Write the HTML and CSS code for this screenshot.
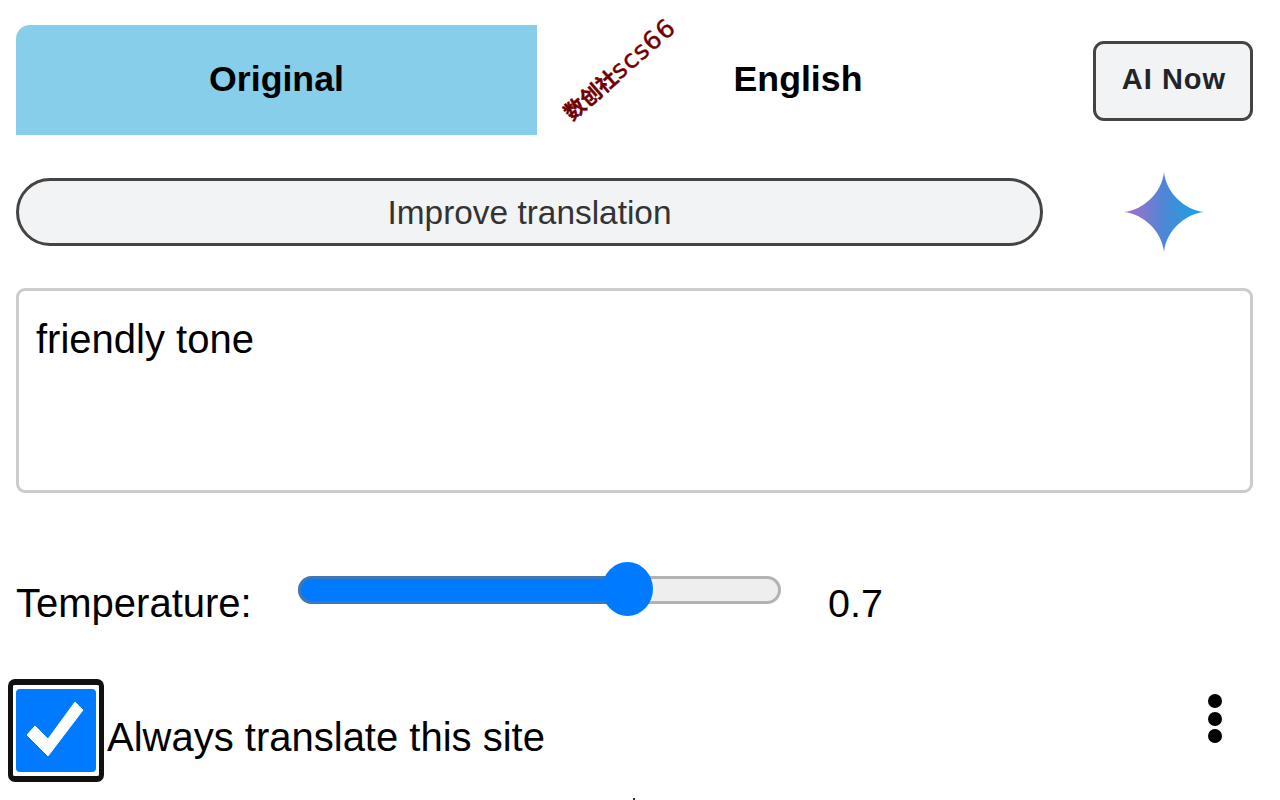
FILE: index.html
```html
<!DOCTYPE html>
<html lang="en">
<head>
<meta charset="utf-8">
<title>Translate</title>
<link rel="stylesheet" href="styles.css">
</head>
<body>
<main class="page">
  <section class="top-row">
    <div class="tabs">
      <div class="tab tab-active">Original</div>
      <div class="tab tab-rest">English</div>
      <span class="watermark"><span class="watermark-cjk">数创社</span>scs66</span>
    </div>
    <button class="ai-now">AI Now</button>
  </section>
  <section class="improve-row">
    <button class="improve">Improve translation</button>
    <svg class="star" viewBox="0 0 80 80" width="80" height="80" aria-hidden="true">
      <defs>
        <linearGradient id="starFill" x1="0" y1="0" x2="1" y2="0">
          <stop offset="0.08" stop-color="#9b72cb"/>
          <stop offset="0.5" stop-color="#4f86d6"/>
          <stop offset="0.92" stop-color="#1ba1e3"/>
        </linearGradient>
      </defs>
      <path fill="url(#starFill)" d="M40 0C42 20 60 38 80 40C60 42 42 60 40 80C38 60 20 42 0 40C20 38 38 20 40 0Z"/>
    </svg>
  </section>
  <div class="prompt">friendly tone</div>
  <section class="temp-row">
    <span class="temp-label">Temperature:</span>
    <div class="slider">
      <div class="slider-fill"></div>
      <div class="slider-thumb"></div>
    </div>
    <span class="temp-value">0.7</span>
  </section>
  <section class="always-row">
    <div class="checkbox-ring">
      <div class="checkbox">
        <svg viewBox="0 0 80 83" width="80" height="83" aria-hidden="true">
          <path fill="#fff" stroke="#fff" stroke-width="1" stroke-linejoin="round" d="M11 46L19 37L32 50L59 13L67 21L32 67Z"/>
        </svg>
      </div>
    </div>
    <span class="always-label">Always translate this site</span>
    <div class="dots"><i></i><i></i><i></i></div>
  </section>
  <div class="speck"></div>
</main>
</body>
</html>
```
FILE: styles.css
```css
html, body {
  margin: 0;
  background: #fff;
  overflow: hidden;
}
body {
  font-family: "Liberation Sans", Arial, sans-serif;
  color: #000;
}
.page {
  position: relative;
  box-sizing: border-box;
  width: 1280px;
  height: 800px;
  padding: 25px 27px 0 16px;
}
.top-row {
  display: flex;
  align-items: center;
  justify-content: space-between;
  height: 110px;
}
.tabs {
  position: relative;
  display: flex;
  width: 1043px;
}
.tab {
  width: 521px;
  height: 108px;
  padding-bottom: 2px;
  display: flex;
  align-items: center;
  justify-content: center;
  font-size: 35.7px;
  font-weight: 700;
}
.tab-rest {
  width: 522px;
}
.tab-active {
  background: #87ceeb;
  border-top-left-radius: 14px;
}
.watermark {
  position: absolute;
  left: 533px;
  top: 29px;
  transform: rotate(-41deg);
  color: #700000;
  font-family: "DejaVu Sans", "Noto Sans CJK SC", sans-serif;
  font-size: 25px;
  letter-spacing: 1px;
  white-space: nowrap;
  -webkit-text-stroke: 0.4px #700000;
}
.watermark-cjk {
  font-size: 21px;
  font-weight: 700;
  letter-spacing: 0;
}
.ai-now {
  box-sizing: border-box;
  width: 160px;
  height: 80px;
  margin-top: 2px;
  padding: 0 0 3px 2px;
  border: 3px solid #444;
  border-radius: 11px;
  background: #f1f3f5;
  color: #212529;
  font-family: inherit;
  font-size: 29px;
  font-weight: 700;
  letter-spacing: 1px;
}
.improve-row {
  display: flex;
  align-items: center;
  margin-top: 37px;
}
.improve {
  box-sizing: border-box;
  flex: none;
  width: 1027px;
  height: 68px;
  padding: 2px 0 0;
  border: 3px solid #444;
  border-radius: 34px;
  background: #f1f3f5;
  color: #333;
  font-family: inherit;
  font-size: 33.4px;
}
.star {
  display: block;
  flex: none;
  margin-left: 81px;
}
.prompt {
  box-sizing: border-box;
  height: 205px;
  margin-top: 36px;
  padding: 25px 17px;
  border: 3px solid #ccc;
  border-radius: 9px;
  font-size: 40px;
  line-height: 46px;
}
.temp-row {
  display: flex;
  align-items: flex-start;
  margin-top: 83px;
  height: 60px;
}
.temp-label {
  width: 282px;
  margin-top: 4px;
  font-size: 40px;
  line-height: 46px;
}
.slider {
  position: relative;
  box-sizing: border-box;
  width: 483px;
  height: 28px;
  border: 3px solid #b3b3b3;
  border-radius: 14px;
  background: #eee;
}
.slider-fill {
  position: absolute;
  left: -3px;
  top: -3px;
  box-sizing: border-box;
  width: 329px;
  height: 28px;
  border: 3px solid #3d78b8;
  border-right: 0;
  border-radius: 14px 0 0 14px;
  background: #007bff;
}
.slider-thumb {
  position: absolute;
  left: 301px;
  top: -17px;
  width: 51px;
  height: 54px;
  border-radius: 50%;
  background: #007bff;
}
.temp-value {
  margin-left: 47px;
  margin-top: 4px;
  font-size: 39.5px;
  line-height: 46px;
}
.always-row {
  display: flex;
  align-items: center;
  margin-top: 53px;
  height: 83px;
}
.checkbox-ring {
  flex: none;
  margin: -10px 0 -10px -8px;
  padding: 4px 3px;
  border-style: solid;
  border-color: #111;
  border-width: 6px 5px;
  border-radius: 7px;
  background: #fff;
}
.checkbox {
  width: 80px;
  height: 83px;
  border-radius: 4px;
  background: #007bff;
}
.checkbox svg {
  display: block;
}
.always-label {
  margin-left: 3px;
  margin-top: 12px;
  font-size: 40px;
  line-height: 46px;
}
.dots {
  display: flex;
  flex-direction: column;
  gap: 3.5px;
  margin: -24px 31px 0 auto;
}
.dots i {
  display: block;
  width: 14px;
  height: 14px;
  border-radius: 50%;
  background: #000;
}
.speck {
  position: absolute;
  left: 633px;
  top: 798px;
  width: 2px;
  height: 2px;
  background: #333;
}
```
